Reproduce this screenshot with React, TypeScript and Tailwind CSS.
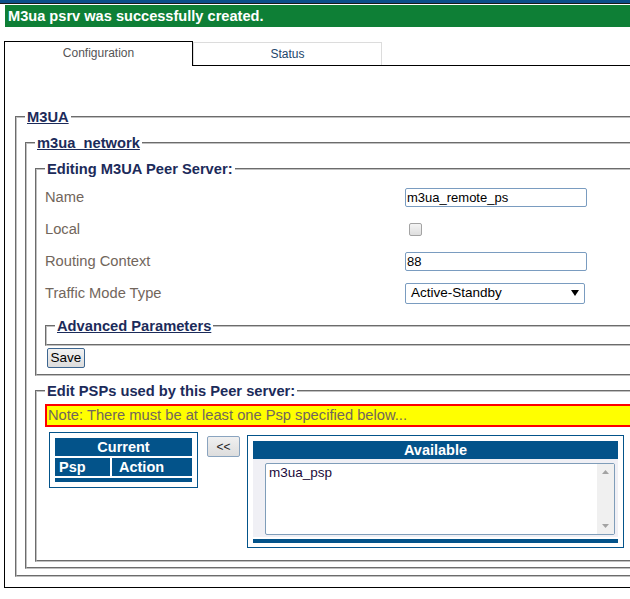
import React from 'react';

const fieldset = '[border:2px_groove_#c0c0c0] px-[8px] min-w-0';
const legendLink = 'px-[2px] text-[14.7px] leading-[16px] font-bold text-[#1c2b5a] underline';
const legendPlain = 'px-[2px] text-[14.7px] leading-[16px] font-bold text-[#1c2b5a]';
const navy = 'bg-[#03538a]';
const cellText = 'h-[18px] text-[14.5px] leading-[18px] font-bold text-white';

function Row({ label, children }: { label: string; children: React.ReactNode }) {
  return (
    <div className="flex h-[32px] items-center">
      <div className="w-[360px] text-[14.7px] leading-[16px] text-[#72665c]">{label}</div>
      {children}
    </div>
  );
}

function TextBox({ value }: { value: string }) {
  return (
    <div className="w-[182px] h-[19px] border border-[#7a9cc0] rounded-[2px] bg-white pl-px text-[13px] leading-[17px] text-black">
      {value}
    </div>
  );
}

export default function App() {
  return (
    <div className="w-[630px] h-[599px] overflow-hidden bg-white font-['Liberation_Sans',Arial,sans-serif]">
      {/* header strip + message */}
      <div className="h-[3px] bg-[#0b4f8a]" />
      <div className="h-px bg-[#1a1a1a]" />
      <div className="h-px bg-white" />
      <div className="ml-[5px] h-[22px] bg-[#0e7f36] pl-[3px] text-[14.6px] leading-[22px] font-bold text-white">
        M3ua psrv was successfully created.
      </div>

      {/* tabs */}
      <div className="mt-[14px] flex items-start pl-[4px]">
        <div className="relative z-10 -mb-px h-[25px] w-[189px] border border-b-0 border-black bg-white pt-[3px] text-center text-[12px] leading-[16px] text-[#555]">
          Configuration
        </div>
        <div className="mt-px h-[23px] w-[189px] border border-b-0 border-[#dcdcdc] pt-[3px] text-center text-[12px] leading-[16px] text-[#22466b]">
          Status
        </div>
      </div>

      <div className="ml-[4px] h-[523px] w-[720px] border border-black pl-[10px] pt-[43px]">
        <fieldset className={`${fieldset} pt-[10px] pb-[6px]`}>
          <legend className={legendLink}>M3UA</legend>
          <fieldset className={`${fieldset} pt-[10px] pb-[5px]`}>
            <legend className={legendLink}>m3ua_network</legend>

            <fieldset className={`${fieldset} pt-[4px] pb-[6px]`}>
              <legend className={legendPlain}>Editing M3UA Peer Server:</legend>
              <Row label="Name">
                <TextBox value="m3ua_remote_ps" />
              </Row>
              <Row label="Local">
                <div className="ml-[4px] h-[13px] w-[13px] rounded-[2px] border border-[#a3a3a3] bg-gradient-to-b from-[#f4f4f4] to-[#dedede]" />
              </Row>
              <Row label="Routing Context">
                <TextBox value="88" />
              </Row>
              <Row label="Traffic Mode Type">
                <div className="flex h-[21px] w-[180px] items-center justify-between rounded-[2px] border border-[#7a9cc0] bg-white pl-[5px] pr-[5px] text-[13.5px] text-black">
                  <span>Active-Standby</span>
                  <svg width="8" height="6" viewBox="0 0 8 6">
                    <polygon points="0,0 8,0 4,6" fill="#000" />
                  </svg>
                </div>
              </Row>

              <fieldset className={`${fieldset} mt-[9px] h-[28px]`}>
                <legend className={legendLink}>Advanced Parameters</legend>
              </fieldset>
              <button className="ml-[2px] mt-[2px] block h-[20px] w-[38px] rounded-[2px] border border-[#3d6690] bg-gradient-to-b from-[#f2f2f2] to-[#dcdcdc] text-[13.5px] leading-[16px] text-black">
                Save
              </button>
            </fieldset>

            <fieldset className={`${fieldset} mt-[7px] pt-[5px] pb-[12px]`}>
              <legend className={legendPlain}>Edit PSPs used by this Peer server:</legend>
              <div className="h-[23px] border-2 border-[#ff0000] bg-[#ffff00] pl-px text-[14.7px] leading-[19px] text-[#72665c]">
                Note: There must be at least one Psp specified below...
              </div>

              <div className="mt-[5px] flex items-start">
                {/* Current */}
                <div className="ml-[4px] w-[149px] border border-[#03538a] p-[5px]">
                  <div className={`${navy} ${cellText} text-center`}>Current</div>
                  <div className="mt-[2px] flex gap-[2px]">
                    <div className={`${navy} ${cellText} w-[55px] pl-[4px]`}>Psp</div>
                    <div className={`${navy} ${cellText} flex-1 pl-[7px]`}>Action</div>
                  </div>
                  <div className={`${navy} mt-[2px] h-[4px]`} />
                </div>

                <button className="ml-[9px] mt-[4px] h-[21px] w-[33px] rounded-[2px] border border-[#8aa4bf] bg-gradient-to-b from-[#f0f0f0] to-[#dddddd] text-[12px] leading-[14px] text-[#222]">
                  &lt;&lt;
                </button>

                {/* Available */}
                <div className="ml-[7px] mt-[3px] w-[377px] border border-[#03538a] px-[5px] pt-[5px] pb-[4px]">
                  <div className={`${navy} ${cellText} text-center`}>Available</div>
                  <div className="h-[78px] bg-[#f0f0f5] pl-[12px] pr-[3px] pt-[4px]">
                    <div className="relative h-[72px] rounded-[2px] border border-[#7f9db9] bg-white">
                      <div className="pl-[3px] pt-px text-[13.5px] leading-[16px] text-[#1a0a3a]">m3ua_psp</div>
                      <div className="absolute right-0 top-0 bottom-0 flex w-[17px] flex-col items-center justify-between bg-[#f0f0f0] py-[6px]">
                        <svg width="7" height="4" viewBox="0 0 7 4">
                          <polygon points="0,4 7,4 3.5,0" fill="#a3a3a3" />
                        </svg>
                        <svg width="7" height="4" viewBox="0 0 7 4">
                          <polygon points="0,0 7,0 3.5,4" fill="#a3a3a3" />
                        </svg>
                      </div>
                    </div>
                  </div>
                  <div className={`${navy} mt-[2px] h-[4px]`} />
                </div>
              </div>
            </fieldset>
          </fieldset>
        </fieldset>
      </div>
    </div>
  );
}
